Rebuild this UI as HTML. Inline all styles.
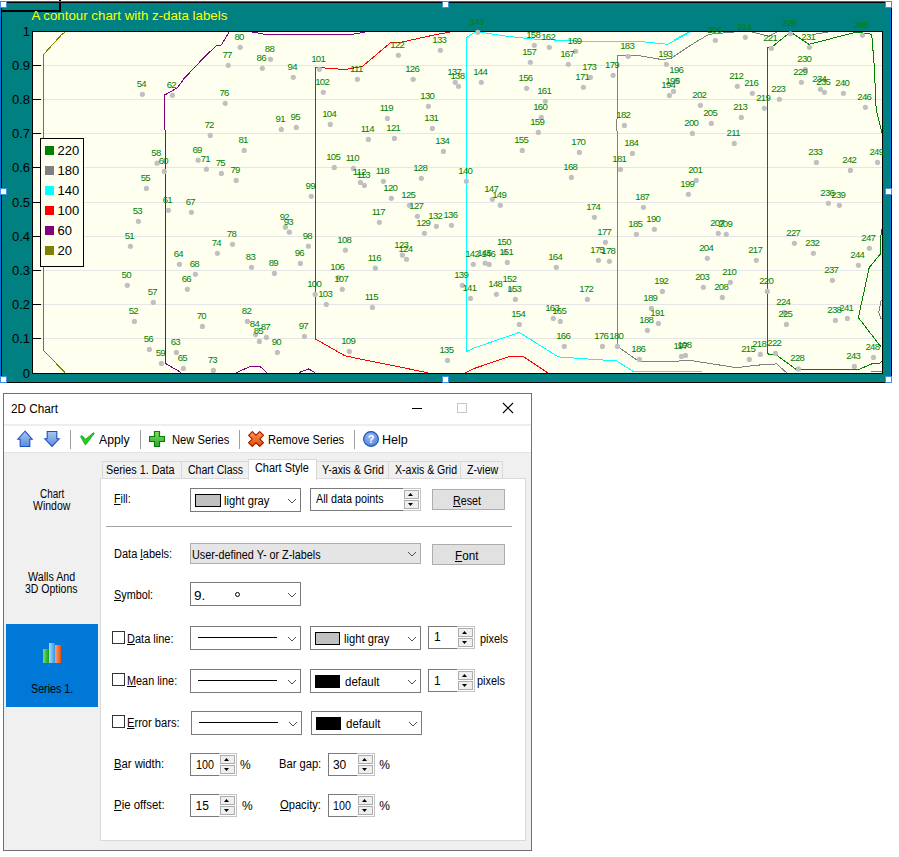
<!DOCTYPE html>
<html><head><meta charset="utf-8">
<style>
html,body{margin:0;padding:0;}
body{width:899px;height:857px;background:#fff;position:relative;overflow:hidden;font-family:"Liberation Sans",sans-serif;}
.a{position:absolute;}
.t{position:absolute;font-size:12px;color:#000;white-space:nowrap;line-height:13px;}
.box{position:absolute;box-sizing:border-box;}
.cb{position:absolute;box-sizing:border-box;background:#fff;border:1px solid #7a7a7a;}
.cbg{position:absolute;box-sizing:border-box;background:#e5e5e5;border:1px solid #adadad;}
.btn{position:absolute;box-sizing:border-box;background:#e1e1e1;border:1px solid #adadad;}
.chev{position:absolute;width:6px;height:6px;border-right:1px solid #333;border-bottom:1px solid #333;transform:rotate(45deg);}
.ck{position:absolute;box-sizing:border-box;width:13px;height:13px;border:1px solid #333;background:#fff;}
.spin{position:absolute;box-sizing:border-box;background:#fff;border:1px solid #c9c9c9;}
.sb{position:absolute;box-sizing:border-box;background:#e1e1e1;border:1px solid #adadad;width:16px;height:10px;}
.up{position:absolute;width:0;height:0;border-left:4px solid transparent;border-right:4px solid transparent;border-bottom:4px solid #000;}
.dn{position:absolute;width:0;height:0;border-left:4px solid transparent;border-right:4px solid transparent;border-top:4px solid #000;}
u{text-decoration:underline;}
</style></head><body>
<svg width="899" height="392" viewBox="0 0 899 392" style="position:absolute;left:0;top:0">
<rect x="1" y="2" width="891" height="381" fill="#008080"/>
<rect x="1" y="2" width="1" height="381" fill="#000"/>
<rect x="1" y="2" width="891" height="1" fill="#000"/>
<rect x="891" y="2" width="1" height="381" fill="#000"/>
<rect x="1" y="382" width="891" height="1" fill="#000"/>
<rect x="1" y="10" width="60" height="2" fill="#000"/>
<rect x="59" y="0" width="2" height="12" fill="#000"/>
<text x="31.5" y="20" font-family="Liberation Sans" font-size="13.3" fill="#ffff00">A contour chart with z-data labels</text>
<rect x="32.5" y="31.5" width="850" height="342" fill="#fffff0" stroke="#000" stroke-width="1"/>
<line x1="33" y1="338.5" x2="882" y2="338.5" stroke="#e6e6e6" stroke-width="1"/>
<line x1="33" y1="304.5" x2="882" y2="304.5" stroke="#e6e6e6" stroke-width="1"/>
<line x1="33" y1="270.5" x2="882" y2="270.5" stroke="#e6e6e6" stroke-width="1"/>
<line x1="33" y1="236.5" x2="882" y2="236.5" stroke="#e6e6e6" stroke-width="1"/>
<line x1="33" y1="202.5" x2="882" y2="202.5" stroke="#e6e6e6" stroke-width="1"/>
<line x1="33" y1="167.5" x2="882" y2="167.5" stroke="#e6e6e6" stroke-width="1"/>
<line x1="33" y1="133.5" x2="882" y2="133.5" stroke="#e6e6e6" stroke-width="1"/>
<line x1="33" y1="99.5" x2="882" y2="99.5" stroke="#e6e6e6" stroke-width="1"/>
<line x1="33" y1="65.5" x2="882" y2="65.5" stroke="#e6e6e6" stroke-width="1"/>
<text x="30" y="377.9" text-anchor="end" font-family="Liberation Sans" font-size="13" fill="#000">0</text>
<line x1="33" y1="338.5" x2="41" y2="338.5" stroke="#000" stroke-width="1"/>
<text x="30" y="342.9" text-anchor="end" font-family="Liberation Sans" font-size="13" fill="#000">0.1</text>
<line x1="33" y1="304.5" x2="41" y2="304.5" stroke="#000" stroke-width="1"/>
<text x="30" y="308.9" text-anchor="end" font-family="Liberation Sans" font-size="13" fill="#000">0.2</text>
<line x1="33" y1="270.5" x2="41" y2="270.5" stroke="#000" stroke-width="1"/>
<text x="30" y="274.9" text-anchor="end" font-family="Liberation Sans" font-size="13" fill="#000">0.3</text>
<line x1="33" y1="236.5" x2="41" y2="236.5" stroke="#000" stroke-width="1"/>
<text x="30" y="240.9" text-anchor="end" font-family="Liberation Sans" font-size="13" fill="#000">0.4</text>
<line x1="33" y1="202.5" x2="41" y2="202.5" stroke="#000" stroke-width="1"/>
<text x="30" y="206.9" text-anchor="end" font-family="Liberation Sans" font-size="13" fill="#000">0.5</text>
<line x1="33" y1="167.5" x2="41" y2="167.5" stroke="#000" stroke-width="1"/>
<text x="30" y="171.9" text-anchor="end" font-family="Liberation Sans" font-size="13" fill="#000">0.6</text>
<line x1="33" y1="133.5" x2="41" y2="133.5" stroke="#000" stroke-width="1"/>
<text x="30" y="137.9" text-anchor="end" font-family="Liberation Sans" font-size="13" fill="#000">0.7</text>
<line x1="33" y1="99.5" x2="41" y2="99.5" stroke="#000" stroke-width="1"/>
<text x="30" y="103.9" text-anchor="end" font-family="Liberation Sans" font-size="13" fill="#000">0.8</text>
<line x1="33" y1="65.5" x2="41" y2="65.5" stroke="#000" stroke-width="1"/>
<text x="30" y="69.9" text-anchor="end" font-family="Liberation Sans" font-size="13" fill="#000">0.9</text>
<text x="30" y="35.9" text-anchor="end" font-family="Liberation Sans" font-size="13" fill="#000">1</text>
<polyline points="65.0,32.0 61.3,35.0 43.5,54.5 43.5,350.2 65.0,372.7" fill="none" stroke="#808000" stroke-width="1" shape-rendering="crispEdges"/>
<polyline points="229.0,32.0 221.4,45.0 216.4,45.5 202.7,58.8 183.9,78.8 177.6,87.6 172.6,90.6 164.6,95.0 164.6,129.6 165.4,130.6 165.4,363.4 172.6,367.7 181.4,372.7" fill="none" stroke="#800080" stroke-width="1" shape-rendering="crispEdges"/>
<polyline points="236.5,372.7 250.2,366.4 260.0,366.4 267.0,372.7" fill="none" stroke="#800080" stroke-width="1" shape-rendering="crispEdges"/>
<polyline points="298.8,372.7 308.8,368.9 315.0,372.7" fill="none" stroke="#800080" stroke-width="1" shape-rendering="crispEdges"/>
<polyline points="252.5,32.0 265.0,34.3 352.6,34.3 365.1,32.0" fill="none" stroke="#800080" stroke-width="1" shape-rendering="crispEdges"/>
<polyline points="450.2,32.0 434.0,35.0 400.2,42.5 390.1,43.0 362.6,66.3 345.1,69.6 325.0,68.0 315.6,67.6 315.6,339.1 345.1,355.9 427.7,372.7" fill="none" stroke="#ff0000" stroke-width="1" shape-rendering="crispEdges"/>
<polyline points="465.2,372.7 475.0,368.2 508.3,356.9 523.8,356.9 547.6,372.7" fill="none" stroke="#ff0000" stroke-width="1" shape-rendering="crispEdges"/>
<polyline points="690.2,32.0 667.7,44.3 645.2,42.0 580.0,41.3 530.0,38.8 508.0,36.4 494.0,34.3 481.0,32.5 475.7,32.2 471.0,34.5 466.5,37.7 466.5,351.4 475.0,347.7 519.3,332.4 558.3,356.9 616.7,361.0 633.4,371.5 702.0,371.5" fill="none" stroke="#00ffff" stroke-width="1" shape-rendering="crispEdges"/>
<polyline points="674.0,40.0 689.0,32.0" fill="none" stroke="#00ffff" stroke-width="1" shape-rendering="crispEdges"/>
<polyline points="617.4,346.4 617.4,131.4 616.4,130.0 616.4,120.0 617.4,118.0 617.4,55.0 633.9,55.0 642.7,56.3 660.2,59.3 670.2,58.8 695.0,42.5 709.0,34.3 734.0,32.0" fill="none" stroke="#808080" stroke-width="1" shape-rendering="crispEdges"/>
<polyline points="751.6,32.0 769.1,36.3 776.6,32.0" fill="none" stroke="#808080" stroke-width="1" shape-rendering="crispEdges"/>
<polyline points="814.0,34.3 828.0,32.0" fill="none" stroke="#808080" stroke-width="1" shape-rendering="crispEdges"/>
<polyline points="617.4,346.4 638.9,361.4 674.0,361.4 689.0,360.2 736.6,367.7 756.6,365.2 776.6,363.9 786.6,372.7" fill="none" stroke="#808080" stroke-width="1" shape-rendering="crispEdges"/>
<polyline points="881.2,300.0 878.7,312.6 881.2,318.9" fill="none" stroke="#808080" stroke-width="1" shape-rendering="crispEdges"/>
<polyline points="871.0,371.5 882.0,371.5" fill="none" stroke="#808080" stroke-width="1" shape-rendering="crispEdges"/>
<polyline points="767.8,353.9 767.8,47.5 772.8,46.3 790.4,32.0 809.1,44.3 856.7,32.0 871.7,34.3 874.2,65.0 876.2,110.0 882.0,132.6" fill="none" stroke="#008000" stroke-width="1" shape-rendering="crispEdges"/>
<polyline points="767.8,353.9 776.6,355.2 796.6,369.7 857.7,370.0 872.1,363.7 879.5,363.4 882.0,360.8" fill="none" stroke="#008000" stroke-width="1" shape-rendering="crispEdges"/>
<polyline points="881.2,228.8 880.5,253.8 869.2,267.6 858.4,317.6 881.2,347.2" fill="none" stroke="#008000" stroke-width="1" shape-rendering="crispEdges"/>
<circle cx="127.3" cy="285.3" r="2.6" fill="#c0c0c0"/>
<circle cx="130.4" cy="246.3" r="2.6" fill="#c0c0c0"/>
<circle cx="134.4" cy="321.4" r="2.6" fill="#c0c0c0"/>
<circle cx="138.4" cy="221.3" r="2.6" fill="#c0c0c0"/>
<circle cx="142.4" cy="94.3" r="2.6" fill="#c0c0c0"/>
<circle cx="146.4" cy="188.4" r="2.6" fill="#c0c0c0"/>
<circle cx="149.4" cy="349.4" r="2.6" fill="#c0c0c0"/>
<circle cx="153.4" cy="302.4" r="2.6" fill="#c0c0c0"/>
<circle cx="157.1" cy="163.2" r="2.6" fill="#c0c0c0"/>
<circle cx="161.4" cy="363.4" r="2.6" fill="#c0c0c0"/>
<circle cx="164.4" cy="171.4" r="2.6" fill="#c0c0c0"/>
<circle cx="168.4" cy="210.3" r="2.6" fill="#c0c0c0"/>
<circle cx="172.4" cy="95.3" r="2.6" fill="#c0c0c0"/>
<circle cx="176.4" cy="352.4" r="2.6" fill="#c0c0c0"/>
<circle cx="179.4" cy="264.3" r="2.6" fill="#c0c0c0"/>
<circle cx="183.4" cy="368.4" r="2.6" fill="#c0c0c0"/>
<circle cx="187.4" cy="289.3" r="2.6" fill="#c0c0c0"/>
<circle cx="191.4" cy="212.3" r="2.6" fill="#c0c0c0"/>
<circle cx="195.4" cy="274.3" r="2.6" fill="#c0c0c0"/>
<circle cx="198.2" cy="160.2" r="2.6" fill="#c0c0c0"/>
<circle cx="202.4" cy="326.4" r="2.6" fill="#c0c0c0"/>
<circle cx="206.4" cy="169.2" r="2.6" fill="#c0c0c0"/>
<circle cx="210.2" cy="135.4" r="2.6" fill="#c0c0c0"/>
<circle cx="213.4" cy="370.4" r="2.6" fill="#c0c0c0"/>
<circle cx="217.4" cy="253.3" r="2.6" fill="#c0c0c0"/>
<circle cx="221.4" cy="173.4" r="2.6" fill="#c0c0c0"/>
<circle cx="225.2" cy="103.3" r="2.6" fill="#c0c0c0"/>
<circle cx="228.2" cy="65.3" r="2.6" fill="#c0c0c0"/>
<circle cx="232.5" cy="244.3" r="2.6" fill="#c0c0c0"/>
<circle cx="236.2" cy="180.4" r="2.6" fill="#c0c0c0"/>
<circle cx="240.2" cy="47.3" r="2.6" fill="#c0c0c0"/>
<circle cx="244.2" cy="150.4" r="2.6" fill="#c0c0c0"/>
<circle cx="247.5" cy="321.4" r="2.6" fill="#c0c0c0"/>
<circle cx="251.5" cy="267.3" r="2.6" fill="#c0c0c0"/>
<circle cx="255.5" cy="334.6" r="2.6" fill="#c0c0c0"/>
<circle cx="259.4" cy="341.4" r="2.6" fill="#c0c0c0"/>
<circle cx="262.3" cy="68.3" r="2.6" fill="#c0c0c0"/>
<circle cx="266.4" cy="337.4" r="2.6" fill="#c0c0c0"/>
<circle cx="270.5" cy="59.3" r="2.6" fill="#c0c0c0"/>
<circle cx="274.4" cy="273.4" r="2.6" fill="#c0c0c0"/>
<circle cx="277.4" cy="352.4" r="2.6" fill="#c0c0c0"/>
<circle cx="281.3" cy="129.4" r="2.6" fill="#c0c0c0"/>
<circle cx="285.4" cy="227.2" r="2.6" fill="#c0c0c0"/>
<circle cx="289.4" cy="232.2" r="2.6" fill="#c0c0c0"/>
<circle cx="293.3" cy="77.3" r="2.6" fill="#c0c0c0"/>
<circle cx="296.3" cy="127.4" r="2.6" fill="#c0c0c0"/>
<circle cx="300.4" cy="263.4" r="2.6" fill="#c0c0c0"/>
<circle cx="304.4" cy="336.4" r="2.6" fill="#c0c0c0"/>
<circle cx="308.4" cy="246.2" r="2.6" fill="#c0c0c0"/>
<circle cx="311.3" cy="196.3" r="2.6" fill="#c0c0c0"/>
<circle cx="315.2" cy="294.4" r="2.6" fill="#c0c0c0"/>
<circle cx="319.3" cy="69.3" r="2.6" fill="#c0c0c0"/>
<circle cx="323.3" cy="92.3" r="2.6" fill="#c0c0c0"/>
<circle cx="326.3" cy="304.4" r="2.6" fill="#c0c0c0"/>
<circle cx="330.3" cy="124.4" r="2.6" fill="#c0c0c0"/>
<circle cx="334.3" cy="167.4" r="2.6" fill="#c0c0c0"/>
<circle cx="338.4" cy="277.5" r="2.6" fill="#c0c0c0"/>
<circle cx="342.3" cy="289.3" r="2.6" fill="#c0c0c0"/>
<circle cx="345.4" cy="250.2" r="2.6" fill="#c0c0c0"/>
<circle cx="349.3" cy="351.4" r="2.6" fill="#c0c0c0"/>
<circle cx="353.4" cy="168.4" r="2.6" fill="#c0c0c0"/>
<circle cx="357.4" cy="79.3" r="2.6" fill="#c0c0c0"/>
<circle cx="360.4" cy="182.4" r="2.6" fill="#c0c0c0"/>
<circle cx="364.4" cy="185.4" r="2.6" fill="#c0c0c0"/>
<circle cx="368.4" cy="139.4" r="2.6" fill="#c0c0c0"/>
<circle cx="372.4" cy="307.4" r="2.6" fill="#c0c0c0"/>
<circle cx="375.4" cy="268.2" r="2.6" fill="#c0c0c0"/>
<circle cx="379.4" cy="222.3" r="2.6" fill="#c0c0c0"/>
<circle cx="383.4" cy="181.3" r="2.6" fill="#c0c0c0"/>
<circle cx="387.4" cy="118.4" r="2.6" fill="#c0c0c0"/>
<circle cx="391.4" cy="198.3" r="2.6" fill="#c0c0c0"/>
<circle cx="394.4" cy="138.4" r="2.6" fill="#c0c0c0"/>
<circle cx="398.4" cy="55.3" r="2.6" fill="#c0c0c0"/>
<circle cx="402.4" cy="255.2" r="2.6" fill="#c0c0c0"/>
<circle cx="406.5" cy="259.3" r="2.6" fill="#c0c0c0"/>
<circle cx="409.4" cy="205.3" r="2.6" fill="#c0c0c0"/>
<circle cx="413.2" cy="79.3" r="2.6" fill="#c0c0c0"/>
<circle cx="417.4" cy="216.3" r="2.6" fill="#c0c0c0"/>
<circle cx="421.3" cy="178.3" r="2.6" fill="#c0c0c0"/>
<circle cx="424.4" cy="233.3" r="2.6" fill="#c0c0c0"/>
<circle cx="428.4" cy="106.3" r="2.6" fill="#c0c0c0"/>
<circle cx="432.4" cy="128.4" r="2.6" fill="#c0c0c0"/>
<circle cx="436.4" cy="226.3" r="2.6" fill="#c0c0c0"/>
<circle cx="440.4" cy="50.3" r="2.6" fill="#c0c0c0"/>
<circle cx="443.4" cy="151.4" r="2.6" fill="#c0c0c0"/>
<circle cx="447.5" cy="360.4" r="2.6" fill="#c0c0c0"/>
<circle cx="451.5" cy="225.3" r="2.6" fill="#c0c0c0"/>
<circle cx="455.2" cy="82.3" r="2.6" fill="#c0c0c0"/>
<circle cx="458.5" cy="86.3" r="2.6" fill="#c0c0c0"/>
<circle cx="462.3" cy="285.3" r="2.6" fill="#c0c0c0"/>
<circle cx="466.4" cy="181.3" r="2.6" fill="#c0c0c0"/>
<circle cx="470.5" cy="298.4" r="2.6" fill="#c0c0c0"/>
<circle cx="473.3" cy="264.3" r="2.6" fill="#c0c0c0"/>
<circle cx="477.8" cy="32.3" r="2.6" fill="#c0c0c0"/>
<circle cx="481.3" cy="82.3" r="2.6" fill="#c0c0c0"/>
<circle cx="485.2" cy="263.2" r="2.6" fill="#c0c0c0"/>
<circle cx="489.2" cy="264.4" r="2.6" fill="#c0c0c0"/>
<circle cx="492.3" cy="199.3" r="2.6" fill="#c0c0c0"/>
<circle cx="496.4" cy="294.3" r="2.6" fill="#c0c0c0"/>
<circle cx="500.3" cy="205.3" r="2.6" fill="#c0c0c0"/>
<circle cx="505.0" cy="252.3" r="2.6" fill="#c0c0c0"/>
<circle cx="507.3" cy="262.4" r="2.6" fill="#c0c0c0"/>
<circle cx="510.5" cy="289.7" r="2.6" fill="#c0c0c0"/>
<circle cx="515.4" cy="299.4" r="2.6" fill="#c0c0c0"/>
<circle cx="519.3" cy="324.4" r="2.6" fill="#c0c0c0"/>
<circle cx="522.3" cy="150.4" r="2.6" fill="#c0c0c0"/>
<circle cx="526.6" cy="88.3" r="2.6" fill="#c0c0c0"/>
<circle cx="530.3" cy="62.3" r="2.6" fill="#c0c0c0"/>
<circle cx="534.3" cy="45.3" r="2.6" fill="#c0c0c0"/>
<circle cx="538.3" cy="132.4" r="2.6" fill="#c0c0c0"/>
<circle cx="541.3" cy="117.4" r="2.6" fill="#c0c0c0"/>
<circle cx="545.3" cy="101.3" r="2.6" fill="#c0c0c0"/>
<circle cx="549.3" cy="47.3" r="2.6" fill="#c0c0c0"/>
<circle cx="553.3" cy="318.4" r="2.6" fill="#c0c0c0"/>
<circle cx="556.3" cy="267.3" r="2.6" fill="#c0c0c0"/>
<circle cx="560.3" cy="321.4" r="2.6" fill="#c0c0c0"/>
<circle cx="564.3" cy="346.4" r="2.6" fill="#c0c0c0"/>
<circle cx="568.3" cy="64.3" r="2.6" fill="#c0c0c0"/>
<circle cx="571.4" cy="177.4" r="2.6" fill="#c0c0c0"/>
<circle cx="575.6" cy="51.3" r="2.6" fill="#c0c0c0"/>
<circle cx="579.4" cy="152.4" r="2.6" fill="#c0c0c0"/>
<circle cx="583.4" cy="87.3" r="2.6" fill="#c0c0c0"/>
<circle cx="587.4" cy="299.4" r="2.6" fill="#c0c0c0"/>
<circle cx="590.4" cy="77.3" r="2.6" fill="#c0c0c0"/>
<circle cx="594.4" cy="217.3" r="2.6" fill="#c0c0c0"/>
<circle cx="598.4" cy="260.3" r="2.6" fill="#c0c0c0"/>
<circle cx="602.4" cy="346.4" r="2.6" fill="#c0c0c0"/>
<circle cx="605.4" cy="242.3" r="2.6" fill="#c0c0c0"/>
<circle cx="609.4" cy="261.3" r="2.6" fill="#c0c0c0"/>
<circle cx="613.1" cy="75.3" r="2.6" fill="#c0c0c0"/>
<circle cx="617.4" cy="346.4" r="2.6" fill="#c0c0c0"/>
<circle cx="620.4" cy="169.4" r="2.6" fill="#c0c0c0"/>
<circle cx="624.4" cy="125.4" r="2.6" fill="#c0c0c0"/>
<circle cx="628.2" cy="56.3" r="2.6" fill="#c0c0c0"/>
<circle cx="632.4" cy="153.4" r="2.6" fill="#c0c0c0"/>
<circle cx="636.4" cy="234.3" r="2.6" fill="#c0c0c0"/>
<circle cx="639.4" cy="359.4" r="2.6" fill="#c0c0c0"/>
<circle cx="643.4" cy="207.3" r="2.6" fill="#c0c0c0"/>
<circle cx="647.4" cy="330.4" r="2.6" fill="#c0c0c0"/>
<circle cx="651.4" cy="308.4" r="2.6" fill="#c0c0c0"/>
<circle cx="654.4" cy="229.3" r="2.6" fill="#c0c0c0"/>
<circle cx="658.4" cy="323.4" r="2.6" fill="#c0c0c0"/>
<circle cx="662.4" cy="291.4" r="2.6" fill="#c0c0c0"/>
<circle cx="666.4" cy="64.3" r="2.6" fill="#c0c0c0"/>
<circle cx="669.4" cy="95.4" r="2.6" fill="#c0c0c0"/>
<circle cx="673.5" cy="91.4" r="2.6" fill="#c0c0c0"/>
<circle cx="677.4" cy="80.2" r="2.6" fill="#c0c0c0"/>
<circle cx="681.5" cy="356.4" r="2.6" fill="#c0c0c0"/>
<circle cx="685.5" cy="355.4" r="2.6" fill="#c0c0c0"/>
<circle cx="688.4" cy="194.3" r="2.6" fill="#c0c0c0"/>
<circle cx="692.4" cy="133.4" r="2.6" fill="#c0c0c0"/>
<circle cx="696.3" cy="180.4" r="2.6" fill="#c0c0c0"/>
<circle cx="700.4" cy="105.3" r="2.6" fill="#c0c0c0"/>
<circle cx="703.3" cy="287.3" r="2.6" fill="#c0c0c0"/>
<circle cx="707.3" cy="258.3" r="2.6" fill="#c0c0c0"/>
<circle cx="711.3" cy="123.4" r="2.6" fill="#c0c0c0"/>
<circle cx="715.3" cy="40.3" r="2.6" fill="#c0c0c0"/>
<circle cx="718.3" cy="233.3" r="2.6" fill="#c0c0c0"/>
<circle cx="722.3" cy="297.4" r="2.6" fill="#c0c0c0"/>
<circle cx="726.3" cy="234.3" r="2.6" fill="#c0c0c0"/>
<circle cx="730.3" cy="282.3" r="2.6" fill="#c0c0c0"/>
<circle cx="734.3" cy="143.4" r="2.6" fill="#c0c0c0"/>
<circle cx="737.3" cy="86.3" r="2.6" fill="#c0c0c0"/>
<circle cx="741.3" cy="117.4" r="2.6" fill="#c0c0c0"/>
<circle cx="745.3" cy="37.3" r="2.6" fill="#c0c0c0"/>
<circle cx="749.3" cy="359.4" r="2.6" fill="#c0c0c0"/>
<circle cx="752.3" cy="93.3" r="2.6" fill="#c0c0c0"/>
<circle cx="756.3" cy="260.3" r="2.6" fill="#c0c0c0"/>
<circle cx="760.3" cy="354.4" r="2.6" fill="#c0c0c0"/>
<circle cx="764.3" cy="108.3" r="2.6" fill="#c0c0c0"/>
<circle cx="767.3" cy="291.4" r="2.6" fill="#c0c0c0"/>
<circle cx="771.3" cy="48.3" r="2.6" fill="#c0c0c0"/>
<circle cx="775.4" cy="353.4" r="2.6" fill="#c0c0c0"/>
<circle cx="779.4" cy="99.3" r="2.6" fill="#c0c0c0"/>
<circle cx="784.4" cy="312.4" r="2.6" fill="#c0c0c0"/>
<circle cx="786.4" cy="324.4" r="2.6" fill="#c0c0c0"/>
<circle cx="790.4" cy="33.8" r="2.6" fill="#c0c0c0"/>
<circle cx="794.4" cy="243.3" r="2.6" fill="#c0c0c0"/>
<circle cx="798.4" cy="368.9" r="2.6" fill="#c0c0c0"/>
<circle cx="801.4" cy="82.3" r="2.6" fill="#c0c0c0"/>
<circle cx="805.4" cy="69.3" r="2.6" fill="#c0c0c0"/>
<circle cx="809.4" cy="47.3" r="2.6" fill="#c0c0c0"/>
<circle cx="813.4" cy="253.3" r="2.6" fill="#c0c0c0"/>
<circle cx="816.4" cy="162.4" r="2.6" fill="#c0c0c0"/>
<circle cx="820.4" cy="89.3" r="2.6" fill="#c0c0c0"/>
<circle cx="824.4" cy="92.3" r="2.6" fill="#c0c0c0"/>
<circle cx="828.4" cy="203.3" r="2.6" fill="#c0c0c0"/>
<circle cx="832.4" cy="280.3" r="2.6" fill="#c0c0c0"/>
<circle cx="835.4" cy="320.4" r="2.6" fill="#c0c0c0"/>
<circle cx="839.4" cy="205.3" r="2.6" fill="#c0c0c0"/>
<circle cx="843.4" cy="93.3" r="2.6" fill="#c0c0c0"/>
<circle cx="847.4" cy="318.4" r="2.6" fill="#c0c0c0"/>
<circle cx="850.4" cy="170.4" r="2.6" fill="#c0c0c0"/>
<circle cx="854.4" cy="366.4" r="2.6" fill="#c0c0c0"/>
<circle cx="858.4" cy="265.3" r="2.6" fill="#c0c0c0"/>
<circle cx="862.4" cy="35.3" r="2.6" fill="#c0c0c0"/>
<circle cx="865.4" cy="107.3" r="2.6" fill="#c0c0c0"/>
<circle cx="869.4" cy="248.3" r="2.6" fill="#c0c0c0"/>
<circle cx="873.5" cy="357.4" r="2.6" fill="#c0c0c0"/>
<circle cx="877.5" cy="162.4" r="2.6" fill="#c0c0c0"/>
<text x="126.2" y="277.7" text-anchor="middle" font-family="Liberation Sans" font-size="9.6" letter-spacing="-0.7" fill="#008000">50</text>
<text x="129.3" y="238.7" text-anchor="middle" font-family="Liberation Sans" font-size="9.6" letter-spacing="-0.7" fill="#008000">51</text>
<text x="133.3" y="313.8" text-anchor="middle" font-family="Liberation Sans" font-size="9.6" letter-spacing="-0.7" fill="#008000">52</text>
<text x="137.3" y="213.7" text-anchor="middle" font-family="Liberation Sans" font-size="9.6" letter-spacing="-0.7" fill="#008000">53</text>
<text x="141.3" y="86.7" text-anchor="middle" font-family="Liberation Sans" font-size="9.6" letter-spacing="-0.7" fill="#008000">54</text>
<text x="145.3" y="180.8" text-anchor="middle" font-family="Liberation Sans" font-size="9.6" letter-spacing="-0.7" fill="#008000">55</text>
<text x="148.3" y="341.8" text-anchor="middle" font-family="Liberation Sans" font-size="9.6" letter-spacing="-0.7" fill="#008000">56</text>
<text x="152.3" y="294.8" text-anchor="middle" font-family="Liberation Sans" font-size="9.6" letter-spacing="-0.7" fill="#008000">57</text>
<text x="156.0" y="155.6" text-anchor="middle" font-family="Liberation Sans" font-size="9.6" letter-spacing="-0.7" fill="#008000">58</text>
<text x="160.3" y="355.8" text-anchor="middle" font-family="Liberation Sans" font-size="9.6" letter-spacing="-0.7" fill="#008000">59</text>
<text x="163.3" y="163.8" text-anchor="middle" font-family="Liberation Sans" font-size="9.6" letter-spacing="-0.7" fill="#008000">60</text>
<text x="167.3" y="202.7" text-anchor="middle" font-family="Liberation Sans" font-size="9.6" letter-spacing="-0.7" fill="#008000">61</text>
<text x="171.3" y="87.7" text-anchor="middle" font-family="Liberation Sans" font-size="9.6" letter-spacing="-0.7" fill="#008000">62</text>
<text x="175.3" y="344.8" text-anchor="middle" font-family="Liberation Sans" font-size="9.6" letter-spacing="-0.7" fill="#008000">63</text>
<text x="178.3" y="256.7" text-anchor="middle" font-family="Liberation Sans" font-size="9.6" letter-spacing="-0.7" fill="#008000">64</text>
<text x="182.3" y="360.8" text-anchor="middle" font-family="Liberation Sans" font-size="9.6" letter-spacing="-0.7" fill="#008000">65</text>
<text x="186.3" y="281.7" text-anchor="middle" font-family="Liberation Sans" font-size="9.6" letter-spacing="-0.7" fill="#008000">66</text>
<text x="190.3" y="204.7" text-anchor="middle" font-family="Liberation Sans" font-size="9.6" letter-spacing="-0.7" fill="#008000">67</text>
<text x="194.3" y="266.7" text-anchor="middle" font-family="Liberation Sans" font-size="9.6" letter-spacing="-0.7" fill="#008000">68</text>
<text x="197.1" y="152.6" text-anchor="middle" font-family="Liberation Sans" font-size="9.6" letter-spacing="-0.7" fill="#008000">69</text>
<text x="201.3" y="318.8" text-anchor="middle" font-family="Liberation Sans" font-size="9.6" letter-spacing="-0.7" fill="#008000">70</text>
<text x="205.3" y="161.6" text-anchor="middle" font-family="Liberation Sans" font-size="9.6" letter-spacing="-0.7" fill="#008000">71</text>
<text x="209.1" y="127.8" text-anchor="middle" font-family="Liberation Sans" font-size="9.6" letter-spacing="-0.7" fill="#008000">72</text>
<text x="212.3" y="362.8" text-anchor="middle" font-family="Liberation Sans" font-size="9.6" letter-spacing="-0.7" fill="#008000">73</text>
<text x="216.3" y="245.7" text-anchor="middle" font-family="Liberation Sans" font-size="9.6" letter-spacing="-0.7" fill="#008000">74</text>
<text x="220.3" y="165.8" text-anchor="middle" font-family="Liberation Sans" font-size="9.6" letter-spacing="-0.7" fill="#008000">75</text>
<text x="224.1" y="95.7" text-anchor="middle" font-family="Liberation Sans" font-size="9.6" letter-spacing="-0.7" fill="#008000">76</text>
<text x="227.1" y="57.7" text-anchor="middle" font-family="Liberation Sans" font-size="9.6" letter-spacing="-0.7" fill="#008000">77</text>
<text x="231.4" y="236.7" text-anchor="middle" font-family="Liberation Sans" font-size="9.6" letter-spacing="-0.7" fill="#008000">78</text>
<text x="235.1" y="172.8" text-anchor="middle" font-family="Liberation Sans" font-size="9.6" letter-spacing="-0.7" fill="#008000">79</text>
<text x="239.1" y="39.7" text-anchor="middle" font-family="Liberation Sans" font-size="9.6" letter-spacing="-0.7" fill="#008000">80</text>
<text x="243.1" y="142.8" text-anchor="middle" font-family="Liberation Sans" font-size="9.6" letter-spacing="-0.7" fill="#008000">81</text>
<text x="246.4" y="313.8" text-anchor="middle" font-family="Liberation Sans" font-size="9.6" letter-spacing="-0.7" fill="#008000">82</text>
<text x="250.4" y="259.7" text-anchor="middle" font-family="Liberation Sans" font-size="9.6" letter-spacing="-0.7" fill="#008000">83</text>
<text x="254.4" y="327.0" text-anchor="middle" font-family="Liberation Sans" font-size="9.6" letter-spacing="-0.7" fill="#008000">84</text>
<text x="258.3" y="333.8" text-anchor="middle" font-family="Liberation Sans" font-size="9.6" letter-spacing="-0.7" fill="#008000">85</text>
<text x="261.2" y="60.7" text-anchor="middle" font-family="Liberation Sans" font-size="9.6" letter-spacing="-0.7" fill="#008000">86</text>
<text x="265.3" y="329.8" text-anchor="middle" font-family="Liberation Sans" font-size="9.6" letter-spacing="-0.7" fill="#008000">87</text>
<text x="269.4" y="51.7" text-anchor="middle" font-family="Liberation Sans" font-size="9.6" letter-spacing="-0.7" fill="#008000">88</text>
<text x="273.3" y="265.8" text-anchor="middle" font-family="Liberation Sans" font-size="9.6" letter-spacing="-0.7" fill="#008000">89</text>
<text x="276.3" y="344.8" text-anchor="middle" font-family="Liberation Sans" font-size="9.6" letter-spacing="-0.7" fill="#008000">90</text>
<text x="280.2" y="121.8" text-anchor="middle" font-family="Liberation Sans" font-size="9.6" letter-spacing="-0.7" fill="#008000">91</text>
<text x="284.3" y="219.6" text-anchor="middle" font-family="Liberation Sans" font-size="9.6" letter-spacing="-0.7" fill="#008000">92</text>
<text x="288.3" y="224.6" text-anchor="middle" font-family="Liberation Sans" font-size="9.6" letter-spacing="-0.7" fill="#008000">93</text>
<text x="292.2" y="69.7" text-anchor="middle" font-family="Liberation Sans" font-size="9.6" letter-spacing="-0.7" fill="#008000">94</text>
<text x="295.2" y="119.8" text-anchor="middle" font-family="Liberation Sans" font-size="9.6" letter-spacing="-0.7" fill="#008000">95</text>
<text x="299.3" y="255.8" text-anchor="middle" font-family="Liberation Sans" font-size="9.6" letter-spacing="-0.7" fill="#008000">96</text>
<text x="303.3" y="328.8" text-anchor="middle" font-family="Liberation Sans" font-size="9.6" letter-spacing="-0.7" fill="#008000">97</text>
<text x="307.3" y="238.6" text-anchor="middle" font-family="Liberation Sans" font-size="9.6" letter-spacing="-0.7" fill="#008000">98</text>
<text x="310.2" y="188.7" text-anchor="middle" font-family="Liberation Sans" font-size="9.6" letter-spacing="-0.7" fill="#008000">99</text>
<text x="314.1" y="286.8" text-anchor="middle" font-family="Liberation Sans" font-size="9.6" letter-spacing="-0.7" fill="#008000">100</text>
<text x="318.2" y="61.7" text-anchor="middle" font-family="Liberation Sans" font-size="9.6" letter-spacing="-0.7" fill="#008000">101</text>
<text x="322.2" y="84.7" text-anchor="middle" font-family="Liberation Sans" font-size="9.6" letter-spacing="-0.7" fill="#008000">102</text>
<text x="325.2" y="296.8" text-anchor="middle" font-family="Liberation Sans" font-size="9.6" letter-spacing="-0.7" fill="#008000">103</text>
<text x="329.2" y="116.8" text-anchor="middle" font-family="Liberation Sans" font-size="9.6" letter-spacing="-0.7" fill="#008000">104</text>
<text x="333.2" y="159.8" text-anchor="middle" font-family="Liberation Sans" font-size="9.6" letter-spacing="-0.7" fill="#008000">105</text>
<text x="337.3" y="269.9" text-anchor="middle" font-family="Liberation Sans" font-size="9.6" letter-spacing="-0.7" fill="#008000">106</text>
<text x="341.2" y="281.7" text-anchor="middle" font-family="Liberation Sans" font-size="9.6" letter-spacing="-0.7" fill="#008000">107</text>
<text x="344.3" y="242.6" text-anchor="middle" font-family="Liberation Sans" font-size="9.6" letter-spacing="-0.7" fill="#008000">108</text>
<text x="348.2" y="343.8" text-anchor="middle" font-family="Liberation Sans" font-size="9.6" letter-spacing="-0.7" fill="#008000">109</text>
<text x="352.3" y="160.8" text-anchor="middle" font-family="Liberation Sans" font-size="9.6" letter-spacing="-0.7" fill="#008000">110</text>
<text x="356.3" y="71.7" text-anchor="middle" font-family="Liberation Sans" font-size="9.6" letter-spacing="-0.7" fill="#008000">111</text>
<text x="359.3" y="174.8" text-anchor="middle" font-family="Liberation Sans" font-size="9.6" letter-spacing="-0.7" fill="#008000">112</text>
<text x="363.3" y="177.8" text-anchor="middle" font-family="Liberation Sans" font-size="9.6" letter-spacing="-0.7" fill="#008000">113</text>
<text x="367.3" y="131.8" text-anchor="middle" font-family="Liberation Sans" font-size="9.6" letter-spacing="-0.7" fill="#008000">114</text>
<text x="371.3" y="299.8" text-anchor="middle" font-family="Liberation Sans" font-size="9.6" letter-spacing="-0.7" fill="#008000">115</text>
<text x="374.3" y="260.6" text-anchor="middle" font-family="Liberation Sans" font-size="9.6" letter-spacing="-0.7" fill="#008000">116</text>
<text x="378.3" y="214.7" text-anchor="middle" font-family="Liberation Sans" font-size="9.6" letter-spacing="-0.7" fill="#008000">117</text>
<text x="382.3" y="173.7" text-anchor="middle" font-family="Liberation Sans" font-size="9.6" letter-spacing="-0.7" fill="#008000">118</text>
<text x="386.3" y="110.8" text-anchor="middle" font-family="Liberation Sans" font-size="9.6" letter-spacing="-0.7" fill="#008000">119</text>
<text x="390.3" y="190.7" text-anchor="middle" font-family="Liberation Sans" font-size="9.6" letter-spacing="-0.7" fill="#008000">120</text>
<text x="393.3" y="130.8" text-anchor="middle" font-family="Liberation Sans" font-size="9.6" letter-spacing="-0.7" fill="#008000">121</text>
<text x="397.3" y="47.7" text-anchor="middle" font-family="Liberation Sans" font-size="9.6" letter-spacing="-0.7" fill="#008000">122</text>
<text x="401.3" y="247.6" text-anchor="middle" font-family="Liberation Sans" font-size="9.6" letter-spacing="-0.7" fill="#008000">123</text>
<text x="405.4" y="251.7" text-anchor="middle" font-family="Liberation Sans" font-size="9.6" letter-spacing="-0.7" fill="#008000">124</text>
<text x="408.3" y="197.7" text-anchor="middle" font-family="Liberation Sans" font-size="9.6" letter-spacing="-0.7" fill="#008000">125</text>
<text x="412.1" y="71.7" text-anchor="middle" font-family="Liberation Sans" font-size="9.6" letter-spacing="-0.7" fill="#008000">126</text>
<text x="416.3" y="208.7" text-anchor="middle" font-family="Liberation Sans" font-size="9.6" letter-spacing="-0.7" fill="#008000">127</text>
<text x="420.2" y="170.7" text-anchor="middle" font-family="Liberation Sans" font-size="9.6" letter-spacing="-0.7" fill="#008000">128</text>
<text x="423.3" y="225.7" text-anchor="middle" font-family="Liberation Sans" font-size="9.6" letter-spacing="-0.7" fill="#008000">129</text>
<text x="427.3" y="98.7" text-anchor="middle" font-family="Liberation Sans" font-size="9.6" letter-spacing="-0.7" fill="#008000">130</text>
<text x="431.3" y="120.8" text-anchor="middle" font-family="Liberation Sans" font-size="9.6" letter-spacing="-0.7" fill="#008000">131</text>
<text x="435.3" y="218.7" text-anchor="middle" font-family="Liberation Sans" font-size="9.6" letter-spacing="-0.7" fill="#008000">132</text>
<text x="439.3" y="42.7" text-anchor="middle" font-family="Liberation Sans" font-size="9.6" letter-spacing="-0.7" fill="#008000">133</text>
<text x="442.3" y="143.8" text-anchor="middle" font-family="Liberation Sans" font-size="9.6" letter-spacing="-0.7" fill="#008000">134</text>
<text x="446.4" y="352.8" text-anchor="middle" font-family="Liberation Sans" font-size="9.6" letter-spacing="-0.7" fill="#008000">135</text>
<text x="450.4" y="217.7" text-anchor="middle" font-family="Liberation Sans" font-size="9.6" letter-spacing="-0.7" fill="#008000">136</text>
<text x="454.1" y="74.7" text-anchor="middle" font-family="Liberation Sans" font-size="9.6" letter-spacing="-0.7" fill="#008000">137</text>
<text x="457.4" y="78.7" text-anchor="middle" font-family="Liberation Sans" font-size="9.6" letter-spacing="-0.7" fill="#008000">138</text>
<text x="461.2" y="277.7" text-anchor="middle" font-family="Liberation Sans" font-size="9.6" letter-spacing="-0.7" fill="#008000">139</text>
<text x="465.3" y="173.7" text-anchor="middle" font-family="Liberation Sans" font-size="9.6" letter-spacing="-0.7" fill="#008000">140</text>
<text x="469.4" y="290.8" text-anchor="middle" font-family="Liberation Sans" font-size="9.6" letter-spacing="-0.7" fill="#008000">141</text>
<text x="472.2" y="256.7" text-anchor="middle" font-family="Liberation Sans" font-size="9.6" letter-spacing="-0.7" fill="#008000">142</text>
<text x="476.7" y="24.7" text-anchor="middle" font-family="Liberation Sans" font-size="9.6" letter-spacing="-0.7" fill="#008000">143</text>
<text x="480.2" y="74.7" text-anchor="middle" font-family="Liberation Sans" font-size="9.6" letter-spacing="-0.7" fill="#008000">144</text>
<text x="484.1" y="255.6" text-anchor="middle" font-family="Liberation Sans" font-size="9.6" letter-spacing="-0.7" fill="#008000">145</text>
<text x="488.1" y="256.8" text-anchor="middle" font-family="Liberation Sans" font-size="9.6" letter-spacing="-0.7" fill="#008000">146</text>
<text x="491.2" y="191.7" text-anchor="middle" font-family="Liberation Sans" font-size="9.6" letter-spacing="-0.7" fill="#008000">147</text>
<text x="495.3" y="286.7" text-anchor="middle" font-family="Liberation Sans" font-size="9.6" letter-spacing="-0.7" fill="#008000">148</text>
<text x="499.2" y="197.7" text-anchor="middle" font-family="Liberation Sans" font-size="9.6" letter-spacing="-0.7" fill="#008000">149</text>
<text x="503.9" y="244.7" text-anchor="middle" font-family="Liberation Sans" font-size="9.6" letter-spacing="-0.7" fill="#008000">150</text>
<text x="506.2" y="254.8" text-anchor="middle" font-family="Liberation Sans" font-size="9.6" letter-spacing="-0.7" fill="#008000">151</text>
<text x="509.4" y="282.1" text-anchor="middle" font-family="Liberation Sans" font-size="9.6" letter-spacing="-0.7" fill="#008000">152</text>
<text x="514.3" y="291.8" text-anchor="middle" font-family="Liberation Sans" font-size="9.6" letter-spacing="-0.7" fill="#008000">153</text>
<text x="518.2" y="316.8" text-anchor="middle" font-family="Liberation Sans" font-size="9.6" letter-spacing="-0.7" fill="#008000">154</text>
<text x="521.2" y="142.8" text-anchor="middle" font-family="Liberation Sans" font-size="9.6" letter-spacing="-0.7" fill="#008000">155</text>
<text x="525.5" y="80.7" text-anchor="middle" font-family="Liberation Sans" font-size="9.6" letter-spacing="-0.7" fill="#008000">156</text>
<text x="529.2" y="54.7" text-anchor="middle" font-family="Liberation Sans" font-size="9.6" letter-spacing="-0.7" fill="#008000">157</text>
<text x="533.2" y="37.7" text-anchor="middle" font-family="Liberation Sans" font-size="9.6" letter-spacing="-0.7" fill="#008000">158</text>
<text x="537.2" y="124.8" text-anchor="middle" font-family="Liberation Sans" font-size="9.6" letter-spacing="-0.7" fill="#008000">159</text>
<text x="540.2" y="109.8" text-anchor="middle" font-family="Liberation Sans" font-size="9.6" letter-spacing="-0.7" fill="#008000">160</text>
<text x="544.2" y="93.7" text-anchor="middle" font-family="Liberation Sans" font-size="9.6" letter-spacing="-0.7" fill="#008000">161</text>
<text x="548.2" y="39.7" text-anchor="middle" font-family="Liberation Sans" font-size="9.6" letter-spacing="-0.7" fill="#008000">162</text>
<text x="552.2" y="310.8" text-anchor="middle" font-family="Liberation Sans" font-size="9.6" letter-spacing="-0.7" fill="#008000">163</text>
<text x="555.2" y="259.7" text-anchor="middle" font-family="Liberation Sans" font-size="9.6" letter-spacing="-0.7" fill="#008000">164</text>
<text x="559.2" y="313.8" text-anchor="middle" font-family="Liberation Sans" font-size="9.6" letter-spacing="-0.7" fill="#008000">165</text>
<text x="563.2" y="338.8" text-anchor="middle" font-family="Liberation Sans" font-size="9.6" letter-spacing="-0.7" fill="#008000">166</text>
<text x="567.2" y="56.7" text-anchor="middle" font-family="Liberation Sans" font-size="9.6" letter-spacing="-0.7" fill="#008000">167</text>
<text x="570.3" y="169.8" text-anchor="middle" font-family="Liberation Sans" font-size="9.6" letter-spacing="-0.7" fill="#008000">168</text>
<text x="574.5" y="43.7" text-anchor="middle" font-family="Liberation Sans" font-size="9.6" letter-spacing="-0.7" fill="#008000">169</text>
<text x="578.3" y="144.8" text-anchor="middle" font-family="Liberation Sans" font-size="9.6" letter-spacing="-0.7" fill="#008000">170</text>
<text x="582.3" y="79.7" text-anchor="middle" font-family="Liberation Sans" font-size="9.6" letter-spacing="-0.7" fill="#008000">171</text>
<text x="586.3" y="291.8" text-anchor="middle" font-family="Liberation Sans" font-size="9.6" letter-spacing="-0.7" fill="#008000">172</text>
<text x="589.3" y="69.7" text-anchor="middle" font-family="Liberation Sans" font-size="9.6" letter-spacing="-0.7" fill="#008000">173</text>
<text x="593.3" y="209.7" text-anchor="middle" font-family="Liberation Sans" font-size="9.6" letter-spacing="-0.7" fill="#008000">174</text>
<text x="597.3" y="252.7" text-anchor="middle" font-family="Liberation Sans" font-size="9.6" letter-spacing="-0.7" fill="#008000">175</text>
<text x="601.3" y="338.8" text-anchor="middle" font-family="Liberation Sans" font-size="9.6" letter-spacing="-0.7" fill="#008000">176</text>
<text x="604.3" y="234.7" text-anchor="middle" font-family="Liberation Sans" font-size="9.6" letter-spacing="-0.7" fill="#008000">177</text>
<text x="608.3" y="253.7" text-anchor="middle" font-family="Liberation Sans" font-size="9.6" letter-spacing="-0.7" fill="#008000">178</text>
<text x="612.0" y="67.7" text-anchor="middle" font-family="Liberation Sans" font-size="9.6" letter-spacing="-0.7" fill="#008000">179</text>
<text x="616.3" y="338.8" text-anchor="middle" font-family="Liberation Sans" font-size="9.6" letter-spacing="-0.7" fill="#008000">180</text>
<text x="619.3" y="161.8" text-anchor="middle" font-family="Liberation Sans" font-size="9.6" letter-spacing="-0.7" fill="#008000">181</text>
<text x="623.3" y="117.8" text-anchor="middle" font-family="Liberation Sans" font-size="9.6" letter-spacing="-0.7" fill="#008000">182</text>
<text x="627.1" y="48.7" text-anchor="middle" font-family="Liberation Sans" font-size="9.6" letter-spacing="-0.7" fill="#008000">183</text>
<text x="631.3" y="145.8" text-anchor="middle" font-family="Liberation Sans" font-size="9.6" letter-spacing="-0.7" fill="#008000">184</text>
<text x="635.3" y="226.7" text-anchor="middle" font-family="Liberation Sans" font-size="9.6" letter-spacing="-0.7" fill="#008000">185</text>
<text x="638.3" y="351.8" text-anchor="middle" font-family="Liberation Sans" font-size="9.6" letter-spacing="-0.7" fill="#008000">186</text>
<text x="642.3" y="199.7" text-anchor="middle" font-family="Liberation Sans" font-size="9.6" letter-spacing="-0.7" fill="#008000">187</text>
<text x="646.3" y="322.8" text-anchor="middle" font-family="Liberation Sans" font-size="9.6" letter-spacing="-0.7" fill="#008000">188</text>
<text x="650.3" y="300.8" text-anchor="middle" font-family="Liberation Sans" font-size="9.6" letter-spacing="-0.7" fill="#008000">189</text>
<text x="653.3" y="221.7" text-anchor="middle" font-family="Liberation Sans" font-size="9.6" letter-spacing="-0.7" fill="#008000">190</text>
<text x="657.3" y="315.8" text-anchor="middle" font-family="Liberation Sans" font-size="9.6" letter-spacing="-0.7" fill="#008000">191</text>
<text x="661.3" y="283.8" text-anchor="middle" font-family="Liberation Sans" font-size="9.6" letter-spacing="-0.7" fill="#008000">192</text>
<text x="665.3" y="56.7" text-anchor="middle" font-family="Liberation Sans" font-size="9.6" letter-spacing="-0.7" fill="#008000">193</text>
<text x="668.3" y="87.8" text-anchor="middle" font-family="Liberation Sans" font-size="9.6" letter-spacing="-0.7" fill="#008000">194</text>
<text x="672.4" y="83.8" text-anchor="middle" font-family="Liberation Sans" font-size="9.6" letter-spacing="-0.7" fill="#008000">195</text>
<text x="676.3" y="72.6" text-anchor="middle" font-family="Liberation Sans" font-size="9.6" letter-spacing="-0.7" fill="#008000">196</text>
<text x="680.4" y="348.8" text-anchor="middle" font-family="Liberation Sans" font-size="9.6" letter-spacing="-0.7" fill="#008000">197</text>
<text x="684.4" y="347.8" text-anchor="middle" font-family="Liberation Sans" font-size="9.6" letter-spacing="-0.7" fill="#008000">198</text>
<text x="687.3" y="186.7" text-anchor="middle" font-family="Liberation Sans" font-size="9.6" letter-spacing="-0.7" fill="#008000">199</text>
<text x="691.3" y="125.8" text-anchor="middle" font-family="Liberation Sans" font-size="9.6" letter-spacing="-0.7" fill="#008000">200</text>
<text x="695.2" y="172.8" text-anchor="middle" font-family="Liberation Sans" font-size="9.6" letter-spacing="-0.7" fill="#008000">201</text>
<text x="699.3" y="97.7" text-anchor="middle" font-family="Liberation Sans" font-size="9.6" letter-spacing="-0.7" fill="#008000">202</text>
<text x="702.2" y="279.7" text-anchor="middle" font-family="Liberation Sans" font-size="9.6" letter-spacing="-0.7" fill="#008000">203</text>
<text x="706.2" y="250.7" text-anchor="middle" font-family="Liberation Sans" font-size="9.6" letter-spacing="-0.7" fill="#008000">204</text>
<text x="710.2" y="115.8" text-anchor="middle" font-family="Liberation Sans" font-size="9.6" letter-spacing="-0.7" fill="#008000">205</text>
<text x="714.2" y="32.7" text-anchor="middle" font-family="Liberation Sans" font-size="9.6" letter-spacing="-0.7" fill="#008000">206</text>
<text x="717.2" y="225.7" text-anchor="middle" font-family="Liberation Sans" font-size="9.6" letter-spacing="-0.7" fill="#008000">207</text>
<text x="721.2" y="289.8" text-anchor="middle" font-family="Liberation Sans" font-size="9.6" letter-spacing="-0.7" fill="#008000">208</text>
<text x="725.2" y="226.7" text-anchor="middle" font-family="Liberation Sans" font-size="9.6" letter-spacing="-0.7" fill="#008000">209</text>
<text x="729.2" y="274.7" text-anchor="middle" font-family="Liberation Sans" font-size="9.6" letter-spacing="-0.7" fill="#008000">210</text>
<text x="733.2" y="135.8" text-anchor="middle" font-family="Liberation Sans" font-size="9.6" letter-spacing="-0.7" fill="#008000">211</text>
<text x="736.2" y="78.7" text-anchor="middle" font-family="Liberation Sans" font-size="9.6" letter-spacing="-0.7" fill="#008000">212</text>
<text x="740.2" y="109.8" text-anchor="middle" font-family="Liberation Sans" font-size="9.6" letter-spacing="-0.7" fill="#008000">213</text>
<text x="744.2" y="29.7" text-anchor="middle" font-family="Liberation Sans" font-size="9.6" letter-spacing="-0.7" fill="#008000">214</text>
<text x="748.2" y="351.8" text-anchor="middle" font-family="Liberation Sans" font-size="9.6" letter-spacing="-0.7" fill="#008000">215</text>
<text x="751.2" y="85.7" text-anchor="middle" font-family="Liberation Sans" font-size="9.6" letter-spacing="-0.7" fill="#008000">216</text>
<text x="755.2" y="252.7" text-anchor="middle" font-family="Liberation Sans" font-size="9.6" letter-spacing="-0.7" fill="#008000">217</text>
<text x="759.2" y="346.8" text-anchor="middle" font-family="Liberation Sans" font-size="9.6" letter-spacing="-0.7" fill="#008000">218</text>
<text x="763.2" y="100.7" text-anchor="middle" font-family="Liberation Sans" font-size="9.6" letter-spacing="-0.7" fill="#008000">219</text>
<text x="766.2" y="283.8" text-anchor="middle" font-family="Liberation Sans" font-size="9.6" letter-spacing="-0.7" fill="#008000">220</text>
<text x="770.2" y="40.7" text-anchor="middle" font-family="Liberation Sans" font-size="9.6" letter-spacing="-0.7" fill="#008000">221</text>
<text x="774.3" y="345.8" text-anchor="middle" font-family="Liberation Sans" font-size="9.6" letter-spacing="-0.7" fill="#008000">222</text>
<text x="778.3" y="91.7" text-anchor="middle" font-family="Liberation Sans" font-size="9.6" letter-spacing="-0.7" fill="#008000">223</text>
<text x="783.3" y="304.8" text-anchor="middle" font-family="Liberation Sans" font-size="9.6" letter-spacing="-0.7" fill="#008000">224</text>
<text x="785.3" y="316.8" text-anchor="middle" font-family="Liberation Sans" font-size="9.6" letter-spacing="-0.7" fill="#008000">225</text>
<text x="789.3" y="26.2" text-anchor="middle" font-family="Liberation Sans" font-size="9.6" letter-spacing="-0.7" fill="#008000">226</text>
<text x="793.3" y="235.7" text-anchor="middle" font-family="Liberation Sans" font-size="9.6" letter-spacing="-0.7" fill="#008000">227</text>
<text x="797.3" y="361.3" text-anchor="middle" font-family="Liberation Sans" font-size="9.6" letter-spacing="-0.7" fill="#008000">228</text>
<text x="800.3" y="74.7" text-anchor="middle" font-family="Liberation Sans" font-size="9.6" letter-spacing="-0.7" fill="#008000">229</text>
<text x="804.3" y="61.7" text-anchor="middle" font-family="Liberation Sans" font-size="9.6" letter-spacing="-0.7" fill="#008000">230</text>
<text x="808.3" y="39.7" text-anchor="middle" font-family="Liberation Sans" font-size="9.6" letter-spacing="-0.7" fill="#008000">231</text>
<text x="812.3" y="245.7" text-anchor="middle" font-family="Liberation Sans" font-size="9.6" letter-spacing="-0.7" fill="#008000">232</text>
<text x="815.3" y="154.8" text-anchor="middle" font-family="Liberation Sans" font-size="9.6" letter-spacing="-0.7" fill="#008000">233</text>
<text x="819.3" y="81.7" text-anchor="middle" font-family="Liberation Sans" font-size="9.6" letter-spacing="-0.7" fill="#008000">234</text>
<text x="823.3" y="84.7" text-anchor="middle" font-family="Liberation Sans" font-size="9.6" letter-spacing="-0.7" fill="#008000">235</text>
<text x="827.3" y="195.7" text-anchor="middle" font-family="Liberation Sans" font-size="9.6" letter-spacing="-0.7" fill="#008000">236</text>
<text x="831.3" y="272.7" text-anchor="middle" font-family="Liberation Sans" font-size="9.6" letter-spacing="-0.7" fill="#008000">237</text>
<text x="834.3" y="312.8" text-anchor="middle" font-family="Liberation Sans" font-size="9.6" letter-spacing="-0.7" fill="#008000">238</text>
<text x="838.3" y="197.7" text-anchor="middle" font-family="Liberation Sans" font-size="9.6" letter-spacing="-0.7" fill="#008000">239</text>
<text x="842.3" y="85.7" text-anchor="middle" font-family="Liberation Sans" font-size="9.6" letter-spacing="-0.7" fill="#008000">240</text>
<text x="846.3" y="310.8" text-anchor="middle" font-family="Liberation Sans" font-size="9.6" letter-spacing="-0.7" fill="#008000">241</text>
<text x="849.3" y="162.8" text-anchor="middle" font-family="Liberation Sans" font-size="9.6" letter-spacing="-0.7" fill="#008000">242</text>
<text x="853.3" y="358.8" text-anchor="middle" font-family="Liberation Sans" font-size="9.6" letter-spacing="-0.7" fill="#008000">243</text>
<text x="857.3" y="257.7" text-anchor="middle" font-family="Liberation Sans" font-size="9.6" letter-spacing="-0.7" fill="#008000">244</text>
<text x="861.3" y="27.7" text-anchor="middle" font-family="Liberation Sans" font-size="9.6" letter-spacing="-0.7" fill="#008000">245</text>
<text x="864.3" y="99.7" text-anchor="middle" font-family="Liberation Sans" font-size="9.6" letter-spacing="-0.7" fill="#008000">246</text>
<text x="868.3" y="240.7" text-anchor="middle" font-family="Liberation Sans" font-size="9.6" letter-spacing="-0.7" fill="#008000">247</text>
<text x="872.4" y="349.8" text-anchor="middle" font-family="Liberation Sans" font-size="9.6" letter-spacing="-0.7" fill="#008000">248</text>
<text x="876.4" y="154.8" text-anchor="middle" font-family="Liberation Sans" font-size="9.6" letter-spacing="-0.7" fill="#008000">249</text>
<rect x="40.5" y="138.5" width="43" height="128" fill="#fffff0" stroke="#000" stroke-width="1"/>
<rect x="45" y="146.0" width="9" height="9" fill="#008000"/>
<text x="57.6" y="155.0" font-family="Liberation Sans" font-size="13" fill="#000">220</text>
<rect x="45" y="166.0" width="9" height="9" fill="#808080"/>
<text x="57.6" y="175.0" font-family="Liberation Sans" font-size="13" fill="#000">180</text>
<rect x="45" y="186.0" width="9" height="9" fill="#00ffff"/>
<text x="57.6" y="195.0" font-family="Liberation Sans" font-size="13" fill="#000">140</text>
<rect x="45" y="206.0" width="9" height="9" fill="#ff0000"/>
<text x="57.6" y="215.0" font-family="Liberation Sans" font-size="13" fill="#000">100</text>
<rect x="45" y="226.0" width="9" height="9" fill="#800080"/>
<text x="57.6" y="235.0" font-family="Liberation Sans" font-size="13" fill="#000">60</text>
<rect x="45" y="246.0" width="9" height="9" fill="#808000"/>
<text x="57.6" y="255.0" font-family="Liberation Sans" font-size="13" fill="#000">20</text>
<rect x="0" y="1" width="891" height="1" fill="#0078d7"/>
<rect x="0" y="1" width="1" height="381" fill="#0078d7"/>
<rect x="890" y="1" width="1" height="381" fill="#0078d7"/>
<rect x="0" y="381" width="891" height="1" fill="#0078d7"/>
<rect x="0" y="1" width="7" height="7" fill="#3d8fe0"/><rect x="1" y="2" width="5" height="5" fill="#fff"/>
<rect x="0" y="188" width="7" height="7" fill="#3d8fe0"/><rect x="1" y="189" width="5" height="5" fill="#fff"/>
<rect x="0" y="376" width="7" height="7" fill="#3d8fe0"/><rect x="1" y="377" width="5" height="5" fill="#fff"/>
<rect x="442" y="1" width="7" height="7" fill="#3d8fe0"/><rect x="443" y="2" width="5" height="5" fill="#fff"/>
<rect x="442" y="376" width="7" height="7" fill="#3d8fe0"/><rect x="443" y="377" width="5" height="5" fill="#fff"/>
<rect x="885" y="1" width="7" height="7" fill="#3d8fe0"/><rect x="886" y="2" width="5" height="5" fill="#fff"/>
<rect x="885" y="188" width="7" height="7" fill="#3d8fe0"/><rect x="886" y="189" width="5" height="5" fill="#fff"/>
<rect x="885" y="376" width="7" height="7" fill="#3d8fe0"/><rect x="886" y="377" width="5" height="5" fill="#fff"/>
</svg>
<!-- dialog -->
<div class="box" style="left:3px;top:393px;width:529px;height:458px;border:1px solid #6f6f6f;background:#f0f0f0;"></div>
<div class="a" style="left:4px;top:394px;width:527px;height:58px;background:#fff;"></div>
<div class="a" style="left:4px;top:424px;width:527px;height:2px;background:#eeeeee;"></div>
<div class="a" style="left:4px;top:452px;width:527px;height:1px;background:#e3e3e3;"></div>
<!-- window controls -->
<div class="a" style="left:412px;top:408px;width:10px;height:1px;background:#000;"></div>
<div class="box" style="left:457px;top:403px;width:10px;height:10px;border:1px solid #c6c6c6;"></div>
<svg class="a" style="left:502px;top:402px" width="12" height="12" viewBox="0 0 12 12"><path d="M1 1L11 11M11 1L1 11" stroke="#000" stroke-width="1.1"/></svg>
<!-- toolbar -->
<svg class="a" style="left:16px;top:430px" width="18" height="18" viewBox="0 0 18 18"><defs><linearGradient id="gb" x1="0" y1="0" x2="0" y2="1"><stop offset="0" stop-color="#a9c6f3"/><stop offset="1" stop-color="#5b8de0"/></linearGradient></defs><path d="M9 1.2L16.2 9.2H13.8V16.5H4.2V9.2H1.8Z" fill="url(#gb)" stroke="#1f4fc0" stroke-width="1.1"/></svg>
<svg class="a" style="left:43px;top:430px" width="18" height="18" viewBox="0 0 18 18"><path d="M4.2 1.5H13.8V8.8H16.2L9 16.5L1.8 8.8H4.2Z" fill="url(#gb)" stroke="#1f4fc0" stroke-width="1.1"/></svg>
<div class="a" style="left:70px;top:430px;width:1px;height:19px;background:#a0a0a0;"></div>
<svg class="a" style="left:76px;top:428px" width="24" height="22" viewBox="0 0 24 22"><path d="M4.5 8.6L6.2 7.6L9.6 11.2L17.6 4.6L18.2 5.6L9.9 16.6L9 16.6Z" fill="#14d814" stroke="#1c6a1c" stroke-width="0.6"/></svg>
<div class="a" style="left:140px;top:430px;width:1px;height:19px;background:#a0a0a0;"></div>
<svg class="a" style="left:149px;top:431px" width="16" height="16" viewBox="0 0 16 16"><defs><linearGradient id="gp" x1="0" y1="0" x2="0" y2="1"><stop offset="0" stop-color="#7ee060"/><stop offset="1" stop-color="#2aa830"/></linearGradient></defs><path d="M5.5 0.5H10.5V5.5H15.5V10.5H10.5V15.5H5.5V10.5H0.5V5.5H5.5Z" fill="url(#gp)" stroke="#0a780a" stroke-width="1.2"/></svg>
<div class="a" style="left:239px;top:430px;width:1px;height:19px;background:#a0a0a0;"></div>
<svg class="a" style="left:248px;top:431px" width="16" height="16" viewBox="0 0 16 16"><defs><linearGradient id="gx" x1="0" y1="0" x2="0" y2="1"><stop offset="0" stop-color="#ff9a50"/><stop offset="1" stop-color="#e04a08"/></linearGradient></defs><path d="M0.6 4.3L4.3 0.6L8 4.2L11.7 0.6L15.4 4.3L11.8 8L15.4 11.7L11.7 15.4L8 11.8L4.3 15.4L0.6 11.7L4.2 8Z" fill="url(#gx)" stroke="#a81800" stroke-width="1.1"/></svg>
<div class="a" style="left:354px;top:430px;width:1px;height:19px;background:#a0a0a0;"></div>
<svg class="a" style="left:363px;top:431px" width="16" height="16" viewBox="0 0 16 16"><defs><radialGradient id="hg" cx="0.45" cy="0.35" r="0.7"><stop offset="0" stop-color="#9ebcf0"/><stop offset="1" stop-color="#4d7fd8"/></radialGradient></defs><circle cx="8" cy="8" r="7.4" fill="url(#hg)" stroke="#1e50b8" stroke-width="1.1"/><text x="8" y="12" text-anchor="middle" font-family="Liberation Sans" font-weight="bold" font-size="11" fill="#fff">?</text></svg>
<!-- left nav -->
<div class="a" style="left:6px;top:624px;width:92px;height:83px;background:#0078d7;"></div>
<div class="a" style="left:43px;top:649px;width:6px;height:14px;background:linear-gradient(90deg,#6fe06a,#1c9a1c);"></div>
<div class="a" style="left:49px;top:643px;width:6px;height:20px;background:linear-gradient(90deg,#a8dcff,#2a9ae8);"></div>
<div class="a" style="left:55px;top:645px;width:6px;height:18px;background:linear-gradient(90deg,#ffa070,#e85010);"></div>
<!-- tabs -->
<div class="box" style="left:102px;top:461px;width:80px;height:18px;border:1px solid #d9d9d9;border-bottom:none;background:#f0f0f0;"></div>
<div class="box" style="left:181px;top:461px;width:68px;height:18px;border:1px solid #d9d9d9;border-bottom:none;background:#f0f0f0;"></div>
<div class="box" style="left:316px;top:461px;width:73px;height:18px;border:1px solid #d9d9d9;border-bottom:none;background:#f0f0f0;"></div>
<div class="box" style="left:388px;top:461px;width:73px;height:18px;border:1px solid #d9d9d9;border-bottom:none;background:#f0f0f0;"></div>
<div class="box" style="left:460px;top:461px;width:43px;height:18px;border:1px solid #d9d9d9;border-bottom:none;background:#f0f0f0;"></div>
<div class="box" style="left:100px;top:478px;width:426px;height:363px;border:1px solid #d9d9d9;background:#fff;"></div>
<div class="box" style="left:248px;top:459px;width:69px;height:21px;border:1px solid #d9d9d9;border-bottom:none;background:#fff;"></div>
<div class="box" style="left:190px;top:488px;width:111px;height:24px;border:1px solid #7a7a7a;background:#fff"></div><svg class="a" style="left:288px;top:499px" width="8" height="4"><rect x="0" y="0" width="1" height="1" fill="#505050"/><rect x="1" y="1" width="1" height="1" fill="#505050"/><rect x="2" y="2" width="1" height="1" fill="#505050"/><rect x="3" y="3" width="1" height="1" fill="#505050"/><rect x="4" y="3" width="1" height="1" fill="#505050"/><rect x="5" y="2" width="1" height="1" fill="#505050"/><rect x="6" y="1" width="1" height="1" fill="#505050"/><rect x="7" y="0" width="1" height="1" fill="#505050"/></svg>
<div class="box" style="left:195px;top:494px;width:26px;height:13px;border:1px solid #000;background:#c0c0c0"></div>
<div class="box" style="left:310px;top:488px;width:94px;height:23px;border:1px solid #7a7a7a;background:#fff"></div><div class="a" style="left:403px;top:488px;width:18px;height:1px;background:#c4c4c4"></div><div class="a" style="left:403px;top:510px;width:18px;height:1px;background:#c4c4c4"></div><div class="a" style="left:420px;top:488px;width:1px;height:23px;background:#c4c4c4"></div><div class="a" style="left:403px;top:489px;width:17px;height:21px;background:#fff"></div><div class="box" style="left:404px;top:490px;width:15px;height:9px;border:1px solid #adadad;background:#efefef"></div><div class="box" style="left:404px;top:500px;width:15px;height:9px;border:1px solid #adadad;background:#efefef"></div><svg class="a" style="left:408px;top:493px" width="5" height="3"><path d="M0 3L2.5 0L5 3Z" fill="#000"/></svg><svg class="a" style="left:408px;top:503px" width="5" height="3"><path d="M0 0L5 0L2.5 3Z" fill="#000"/></svg>
<div class="box" style="left:432px;top:489px;width:73px;height:21px;border:1px solid #adadad;background:#e1e1e1"></div>
<div class="a" style="left:106px;top:526px;width:406px;height:1px;background:#a0a0a0"></div>
<div class="box" style="left:190px;top:543px;width:231px;height:21px;border:1px solid #adadad;background:#e5e5e5"></div><svg class="a" style="left:408px;top:552px" width="8" height="4"><rect x="0" y="0" width="1" height="1" fill="#505050"/><rect x="1" y="1" width="1" height="1" fill="#505050"/><rect x="2" y="2" width="1" height="1" fill="#505050"/><rect x="3" y="3" width="1" height="1" fill="#505050"/><rect x="4" y="3" width="1" height="1" fill="#505050"/><rect x="5" y="2" width="1" height="1" fill="#505050"/><rect x="6" y="1" width="1" height="1" fill="#505050"/><rect x="7" y="0" width="1" height="1" fill="#505050"/></svg>
<div class="box" style="left:432px;top:544px;width:73px;height:21px;border:1px solid #adadad;background:#e1e1e1"></div>
<div class="box" style="left:190px;top:582px;width:111px;height:24px;border:1px solid #7a7a7a;background:#fff"></div><svg class="a" style="left:288px;top:593px" width="8" height="4"><rect x="0" y="0" width="1" height="1" fill="#505050"/><rect x="1" y="1" width="1" height="1" fill="#505050"/><rect x="2" y="2" width="1" height="1" fill="#505050"/><rect x="3" y="3" width="1" height="1" fill="#505050"/><rect x="4" y="3" width="1" height="1" fill="#505050"/><rect x="5" y="2" width="1" height="1" fill="#505050"/><rect x="6" y="1" width="1" height="1" fill="#505050"/><rect x="7" y="0" width="1" height="1" fill="#505050"/></svg>
<div class="box" style="left:235px;top:592px;width:5px;height:5px;border:1px solid #000;border-radius:50%"></div>
<div class="box" style="left:112px;top:631px;width:13px;height:13px;border:1px solid #333;background:#fff"></div>
<div class="box" style="left:190px;top:626px;width:111px;height:24px;border:1px solid #7a7a7a;background:#fff"></div><svg class="a" style="left:288px;top:637px" width="8" height="4"><rect x="0" y="0" width="1" height="1" fill="#505050"/><rect x="1" y="1" width="1" height="1" fill="#505050"/><rect x="2" y="2" width="1" height="1" fill="#505050"/><rect x="3" y="3" width="1" height="1" fill="#505050"/><rect x="4" y="3" width="1" height="1" fill="#505050"/><rect x="5" y="2" width="1" height="1" fill="#505050"/><rect x="6" y="1" width="1" height="1" fill="#505050"/><rect x="7" y="0" width="1" height="1" fill="#505050"/></svg>
<div class="a" style="left:198px;top:637px;width:79px;height:1px;background:#000"></div>
<div class="box" style="left:310px;top:626px;width:111px;height:24px;border:1px solid #7a7a7a;background:#fff"></div><svg class="a" style="left:408px;top:637px" width="8" height="4"><rect x="0" y="0" width="1" height="1" fill="#505050"/><rect x="1" y="1" width="1" height="1" fill="#505050"/><rect x="2" y="2" width="1" height="1" fill="#505050"/><rect x="3" y="3" width="1" height="1" fill="#505050"/><rect x="4" y="3" width="1" height="1" fill="#505050"/><rect x="5" y="2" width="1" height="1" fill="#505050"/><rect x="6" y="1" width="1" height="1" fill="#505050"/><rect x="7" y="0" width="1" height="1" fill="#505050"/></svg>
<div class="box" style="left:315px;top:632px;width:25px;height:13px;border:1px solid #000;background:#c0c0c0"></div>
<div class="box" style="left:428px;top:626px;width:30px;height:23px;border:1px solid #7a7a7a;background:#fff"></div><div class="a" style="left:457px;top:626px;width:18px;height:1px;background:#c4c4c4"></div><div class="a" style="left:457px;top:648px;width:18px;height:1px;background:#c4c4c4"></div><div class="a" style="left:474px;top:626px;width:1px;height:23px;background:#c4c4c4"></div><div class="a" style="left:457px;top:627px;width:17px;height:21px;background:#fff"></div><div class="box" style="left:458px;top:628px;width:15px;height:9px;border:1px solid #adadad;background:#efefef"></div><div class="box" style="left:458px;top:638px;width:15px;height:9px;border:1px solid #adadad;background:#efefef"></div><svg class="a" style="left:462px;top:631px" width="5" height="3"><path d="M0 3L2.5 0L5 3Z" fill="#000"/></svg><svg class="a" style="left:462px;top:641px" width="5" height="3"><path d="M0 0L5 0L2.5 3Z" fill="#000"/></svg>
<div class="box" style="left:112px;top:673px;width:13px;height:13px;border:1px solid #333;background:#fff"></div>
<div class="box" style="left:190px;top:669px;width:111px;height:24px;border:1px solid #7a7a7a;background:#fff"></div><svg class="a" style="left:288px;top:680px" width="8" height="4"><rect x="0" y="0" width="1" height="1" fill="#505050"/><rect x="1" y="1" width="1" height="1" fill="#505050"/><rect x="2" y="2" width="1" height="1" fill="#505050"/><rect x="3" y="3" width="1" height="1" fill="#505050"/><rect x="4" y="3" width="1" height="1" fill="#505050"/><rect x="5" y="2" width="1" height="1" fill="#505050"/><rect x="6" y="1" width="1" height="1" fill="#505050"/><rect x="7" y="0" width="1" height="1" fill="#505050"/></svg>
<div class="a" style="left:198px;top:680px;width:79px;height:1px;background:#000"></div>
<div class="box" style="left:310px;top:669px;width:111px;height:24px;border:1px solid #7a7a7a;background:#fff"></div><svg class="a" style="left:408px;top:680px" width="8" height="4"><rect x="0" y="0" width="1" height="1" fill="#505050"/><rect x="1" y="1" width="1" height="1" fill="#505050"/><rect x="2" y="2" width="1" height="1" fill="#505050"/><rect x="3" y="3" width="1" height="1" fill="#505050"/><rect x="4" y="3" width="1" height="1" fill="#505050"/><rect x="5" y="2" width="1" height="1" fill="#505050"/><rect x="6" y="1" width="1" height="1" fill="#505050"/><rect x="7" y="0" width="1" height="1" fill="#505050"/></svg>
<div class="box" style="left:315px;top:675px;width:25px;height:13px;border:1px solid #000;background:#000"></div>
<div class="box" style="left:428px;top:669px;width:30px;height:23px;border:1px solid #7a7a7a;background:#fff"></div><div class="a" style="left:457px;top:669px;width:18px;height:1px;background:#c4c4c4"></div><div class="a" style="left:457px;top:691px;width:18px;height:1px;background:#c4c4c4"></div><div class="a" style="left:474px;top:669px;width:1px;height:23px;background:#c4c4c4"></div><div class="a" style="left:457px;top:670px;width:17px;height:21px;background:#fff"></div><div class="box" style="left:458px;top:671px;width:15px;height:9px;border:1px solid #adadad;background:#efefef"></div><div class="box" style="left:458px;top:681px;width:15px;height:9px;border:1px solid #adadad;background:#efefef"></div><svg class="a" style="left:462px;top:674px" width="5" height="3"><path d="M0 3L2.5 0L5 3Z" fill="#000"/></svg><svg class="a" style="left:462px;top:684px" width="5" height="3"><path d="M0 0L5 0L2.5 3Z" fill="#000"/></svg>
<div class="box" style="left:112px;top:715px;width:13px;height:13px;border:1px solid #333;background:#fff"></div>
<div class="box" style="left:191px;top:711px;width:111px;height:24px;border:1px solid #7a7a7a;background:#fff"></div><svg class="a" style="left:289px;top:722px" width="8" height="4"><rect x="0" y="0" width="1" height="1" fill="#505050"/><rect x="1" y="1" width="1" height="1" fill="#505050"/><rect x="2" y="2" width="1" height="1" fill="#505050"/><rect x="3" y="3" width="1" height="1" fill="#505050"/><rect x="4" y="3" width="1" height="1" fill="#505050"/><rect x="5" y="2" width="1" height="1" fill="#505050"/><rect x="6" y="1" width="1" height="1" fill="#505050"/><rect x="7" y="0" width="1" height="1" fill="#505050"/></svg>
<div class="a" style="left:199px;top:722px;width:79px;height:1px;background:#000"></div>
<div class="box" style="left:311px;top:711px;width:111px;height:24px;border:1px solid #7a7a7a;background:#fff"></div><svg class="a" style="left:409px;top:722px" width="8" height="4"><rect x="0" y="0" width="1" height="1" fill="#505050"/><rect x="1" y="1" width="1" height="1" fill="#505050"/><rect x="2" y="2" width="1" height="1" fill="#505050"/><rect x="3" y="3" width="1" height="1" fill="#505050"/><rect x="4" y="3" width="1" height="1" fill="#505050"/><rect x="5" y="2" width="1" height="1" fill="#505050"/><rect x="6" y="1" width="1" height="1" fill="#505050"/><rect x="7" y="0" width="1" height="1" fill="#505050"/></svg>
<div class="box" style="left:316px;top:717px;width:25px;height:13px;border:1px solid #000;background:#000"></div>
<div class="box" style="left:190px;top:753px;width:30px;height:23px;border:1px solid #7a7a7a;background:#fff"></div><div class="a" style="left:219px;top:753px;width:18px;height:1px;background:#c4c4c4"></div><div class="a" style="left:219px;top:775px;width:18px;height:1px;background:#c4c4c4"></div><div class="a" style="left:236px;top:753px;width:1px;height:23px;background:#c4c4c4"></div><div class="a" style="left:219px;top:754px;width:17px;height:21px;background:#fff"></div><div class="box" style="left:220px;top:755px;width:15px;height:9px;border:1px solid #adadad;background:#efefef"></div><div class="box" style="left:220px;top:765px;width:15px;height:9px;border:1px solid #adadad;background:#efefef"></div><svg class="a" style="left:224px;top:758px" width="5" height="3"><path d="M0 3L2.5 0L5 3Z" fill="#000"/></svg><svg class="a" style="left:224px;top:768px" width="5" height="3"><path d="M0 0L5 0L2.5 3Z" fill="#000"/></svg>
<div class="box" style="left:328px;top:753px;width:30px;height:23px;border:1px solid #7a7a7a;background:#fff"></div><div class="a" style="left:357px;top:753px;width:18px;height:1px;background:#c4c4c4"></div><div class="a" style="left:357px;top:775px;width:18px;height:1px;background:#c4c4c4"></div><div class="a" style="left:374px;top:753px;width:1px;height:23px;background:#c4c4c4"></div><div class="a" style="left:357px;top:754px;width:17px;height:21px;background:#fff"></div><div class="box" style="left:358px;top:755px;width:15px;height:9px;border:1px solid #adadad;background:#efefef"></div><div class="box" style="left:358px;top:765px;width:15px;height:9px;border:1px solid #adadad;background:#efefef"></div><svg class="a" style="left:362px;top:758px" width="5" height="3"><path d="M0 3L2.5 0L5 3Z" fill="#000"/></svg><svg class="a" style="left:362px;top:768px" width="5" height="3"><path d="M0 0L5 0L2.5 3Z" fill="#000"/></svg>
<div class="box" style="left:190px;top:794px;width:30px;height:23px;border:1px solid #7a7a7a;background:#fff"></div><div class="a" style="left:219px;top:794px;width:18px;height:1px;background:#c4c4c4"></div><div class="a" style="left:219px;top:816px;width:18px;height:1px;background:#c4c4c4"></div><div class="a" style="left:236px;top:794px;width:1px;height:23px;background:#c4c4c4"></div><div class="a" style="left:219px;top:795px;width:17px;height:21px;background:#fff"></div><div class="box" style="left:220px;top:796px;width:15px;height:9px;border:1px solid #adadad;background:#efefef"></div><div class="box" style="left:220px;top:806px;width:15px;height:9px;border:1px solid #adadad;background:#efefef"></div><svg class="a" style="left:224px;top:799px" width="5" height="3"><path d="M0 3L2.5 0L5 3Z" fill="#000"/></svg><svg class="a" style="left:224px;top:809px" width="5" height="3"><path d="M0 0L5 0L2.5 3Z" fill="#000"/></svg>
<div class="box" style="left:328px;top:794px;width:30px;height:23px;border:1px solid #7a7a7a;background:#fff"></div><div class="a" style="left:357px;top:794px;width:18px;height:1px;background:#c4c4c4"></div><div class="a" style="left:357px;top:816px;width:18px;height:1px;background:#c4c4c4"></div><div class="a" style="left:374px;top:794px;width:1px;height:23px;background:#c4c4c4"></div><div class="a" style="left:357px;top:795px;width:17px;height:21px;background:#fff"></div><div class="box" style="left:358px;top:796px;width:15px;height:9px;border:1px solid #adadad;background:#efefef"></div><div class="box" style="left:358px;top:806px;width:15px;height:9px;border:1px solid #adadad;background:#efefef"></div><svg class="a" style="left:362px;top:799px" width="5" height="3"><path d="M0 3L2.5 0L5 3Z" fill="#000"/></svg><svg class="a" style="left:362px;top:809px" width="5" height="3"><path d="M0 0L5 0L2.5 3Z" fill="#000"/></svg>
<div class="t" style="left:11.0px;top:402.5px;font-size:12px;transform:scaleX(0.9787);transform-origin:0 0">2D Chart</div>
<div class="t" style="left:99.2px;top:434.1px;font-size:12px;transform:scaleX(1.02);transform-origin:0 0">Apply</div>
<div class="t" style="left:171.6px;top:434.1px;font-size:12px;transform:scaleX(0.9333);transform-origin:0 0">New Series</div>
<div class="t" style="left:267.7px;top:434.1px;font-size:12px;transform:scaleX(0.9284);transform-origin:0 0">Remove Series</div>
<div class="t" style="left:382.4px;top:434.1px;font-size:12px;transform:scaleX(1.0435);transform-origin:0 0">Help</div>
<div class="t" style="left:106.3px;top:463.8px;font-size:12px;transform:scaleX(0.9014);transform-origin:0 0">Series 1. Data</div>
<div class="t" style="left:187.6px;top:463.8px;font-size:12px;transform:scaleX(0.8791);transform-origin:0 0">Chart Class</div>
<div class="t" style="left:254.7px;top:462.0px;font-size:12px;transform:scaleX(0.9071);transform-origin:0 0">Chart Style</div>
<div class="t" style="left:322.2px;top:463.8px;font-size:12px;transform:scaleX(0.8899);transform-origin:0 0">Y-axis &amp; Grid</div>
<div class="t" style="left:395.2px;top:463.8px;font-size:12px;transform:scaleX(0.8772);transform-origin:0 0">X-axis &amp; Grid</div>
<div class="t" style="left:466.6px;top:463.8px;font-size:12px;transform:scaleX(0.8835);transform-origin:0 0">Z-view</div>
<div class="t" style="left:113.7px;top:492.7px;font-size:12px;transform:scaleX(0.8942);transform-origin:0 0"><u>F</u>ill:</div>
<div class="t" style="left:223.7px;top:495.3px;font-size:12px;transform:scaleX(0.9334);transform-origin:0 0">light gray</div>
<div class="t" style="left:315.9px;top:493.3px;font-size:12px;transform:scaleX(0.8987);transform-origin:0 0">All data points</div>
<div class="t" style="left:452.7px;top:495.0px;font-size:12px;transform:scaleX(0.8938);transform-origin:0 0"><u>R</u>eset</div>
<div class="t" style="left:114.1px;top:548.0px;font-size:12px;transform:scaleX(0.918);transform-origin:0 0">Data <u>l</u>abels:</div>
<div class="t" style="left:192.4px;top:549.0px;font-size:12px;transform:scaleX(0.9007);transform-origin:0 0">User-defined Y- or Z-labels</div>
<div class="t" style="left:455.3px;top:550.0px;font-size:12px;transform:scaleX(0.974);transform-origin:0 0"><u>F</u>ont</div>
<div class="t" style="left:114.1px;top:588.7px;font-size:12px;transform:scaleX(0.9024);transform-origin:0 0"><u>S</u>ymbol:</div>
<div class="t" style="left:194.4px;top:589.5px;font-size:12px;transform:scaleX(1.125);transform-origin:0 0">9.</div>
<div class="t" style="left:127.1px;top:633.0px;font-size:12px;transform:scaleX(0.9184);transform-origin:0 0"><u>D</u>ata line:</div>
<div class="t" style="left:127.1px;top:675.0px;font-size:12px;transform:scaleX(0.9057);transform-origin:0 0"><u>M</u>ean line:</div>
<div class="t" style="left:127.1px;top:717.0px;font-size:12px;transform:scaleX(0.9273);transform-origin:0 0"><u>E</u>rror bars:</div>
<div class="t" style="left:343.9px;top:633.0px;font-size:12px;transform:scaleX(0.9334);transform-origin:0 0">light gray</div>
<div class="t" style="left:434.0px;top:631.2px;font-size:12px;transform:scaleX(1.0);transform-origin:0 0">1</div>
<div class="t" style="left:479.6px;top:632.9px;font-size:12px;transform:scaleX(0.9105);transform-origin:0 0">pixels</div>
<div class="t" style="left:344.9px;top:675.7px;font-size:12px;transform:scaleX(0.9556);transform-origin:0 0">default</div>
<div class="t" style="left:434.0px;top:674.6px;font-size:12px;transform:scaleX(1.0);transform-origin:0 0">1</div>
<div class="t" style="left:477.4px;top:675.2px;font-size:12px;transform:scaleX(0.9105);transform-origin:0 0">pixels</div>
<div class="t" style="left:345.6px;top:717.7px;font-size:12px;transform:scaleX(0.9556);transform-origin:0 0">default</div>
<div class="t" style="left:113.7px;top:758.2px;font-size:12px;transform:scaleX(0.9373);transform-origin:0 0"><u>B</u>ar width:</div>
<div class="t" style="left:195.5px;top:758.7px;font-size:12px;transform:scaleX(0.8947);transform-origin:0 0">100</div>
<div class="t" style="left:239.9px;top:758.7px;font-size:12px;transform:scaleX(1.0);transform-origin:0 0">%</div>
<div class="t" style="left:278.7px;top:758.2px;font-size:12px;transform:scaleX(0.9302);transform-origin:0 0">Bar <u>g</u>ap:</div>
<div class="t" style="left:332.9px;top:758.7px;font-size:12px;transform:scaleX(1.0);transform-origin:0 0">30</div>
<div class="t" style="left:379.3px;top:758.7px;font-size:12px;transform:scaleX(1.0);transform-origin:0 0">%</div>
<div class="t" style="left:113.7px;top:799.1px;font-size:12px;transform:scaleX(0.9531);transform-origin:0 0"><u>P</u>ie offset:</div>
<div class="t" style="left:195.5px;top:799.6px;font-size:12px;transform:scaleX(1.0);transform-origin:0 0">15</div>
<div class="t" style="left:241.9px;top:799.6px;font-size:12px;transform:scaleX(1.0);transform-origin:0 0">%</div>
<div class="t" style="left:279.7px;top:799.4px;font-size:12px;transform:scaleX(0.9302);transform-origin:0 0"><u>O</u>pacity:</div>
<div class="t" style="left:333.3px;top:799.6px;font-size:12px;transform:scaleX(0.8947);transform-origin:0 0">100</div>
<div class="t" style="left:379.3px;top:799.6px;font-size:12px;transform:scaleX(1.0);transform-origin:0 0">%</div>
<div class="t" style="left:39.6px;top:487.7px;font-size:12px;transform:scaleX(0.8245);transform-origin:0 0">Chart</div>
<div class="t" style="left:33.3px;top:500.0px;font-size:12px;transform:scaleX(0.8744);transform-origin:0 0">Window</div>
<div class="t" style="left:28.1px;top:570.7px;font-size:12px;transform:scaleX(0.8926);transform-origin:0 0">Walls And</div>
<div class="t" style="left:25.3px;top:583.3px;font-size:12px;transform:scaleX(0.8746);transform-origin:0 0">3D Options</div>
<div class="t" style="left:31.2px;top:683.3px;font-size:12px;transform:scaleX(0.8933);transform-origin:0 0">Series 1.</div>
</body></html>
